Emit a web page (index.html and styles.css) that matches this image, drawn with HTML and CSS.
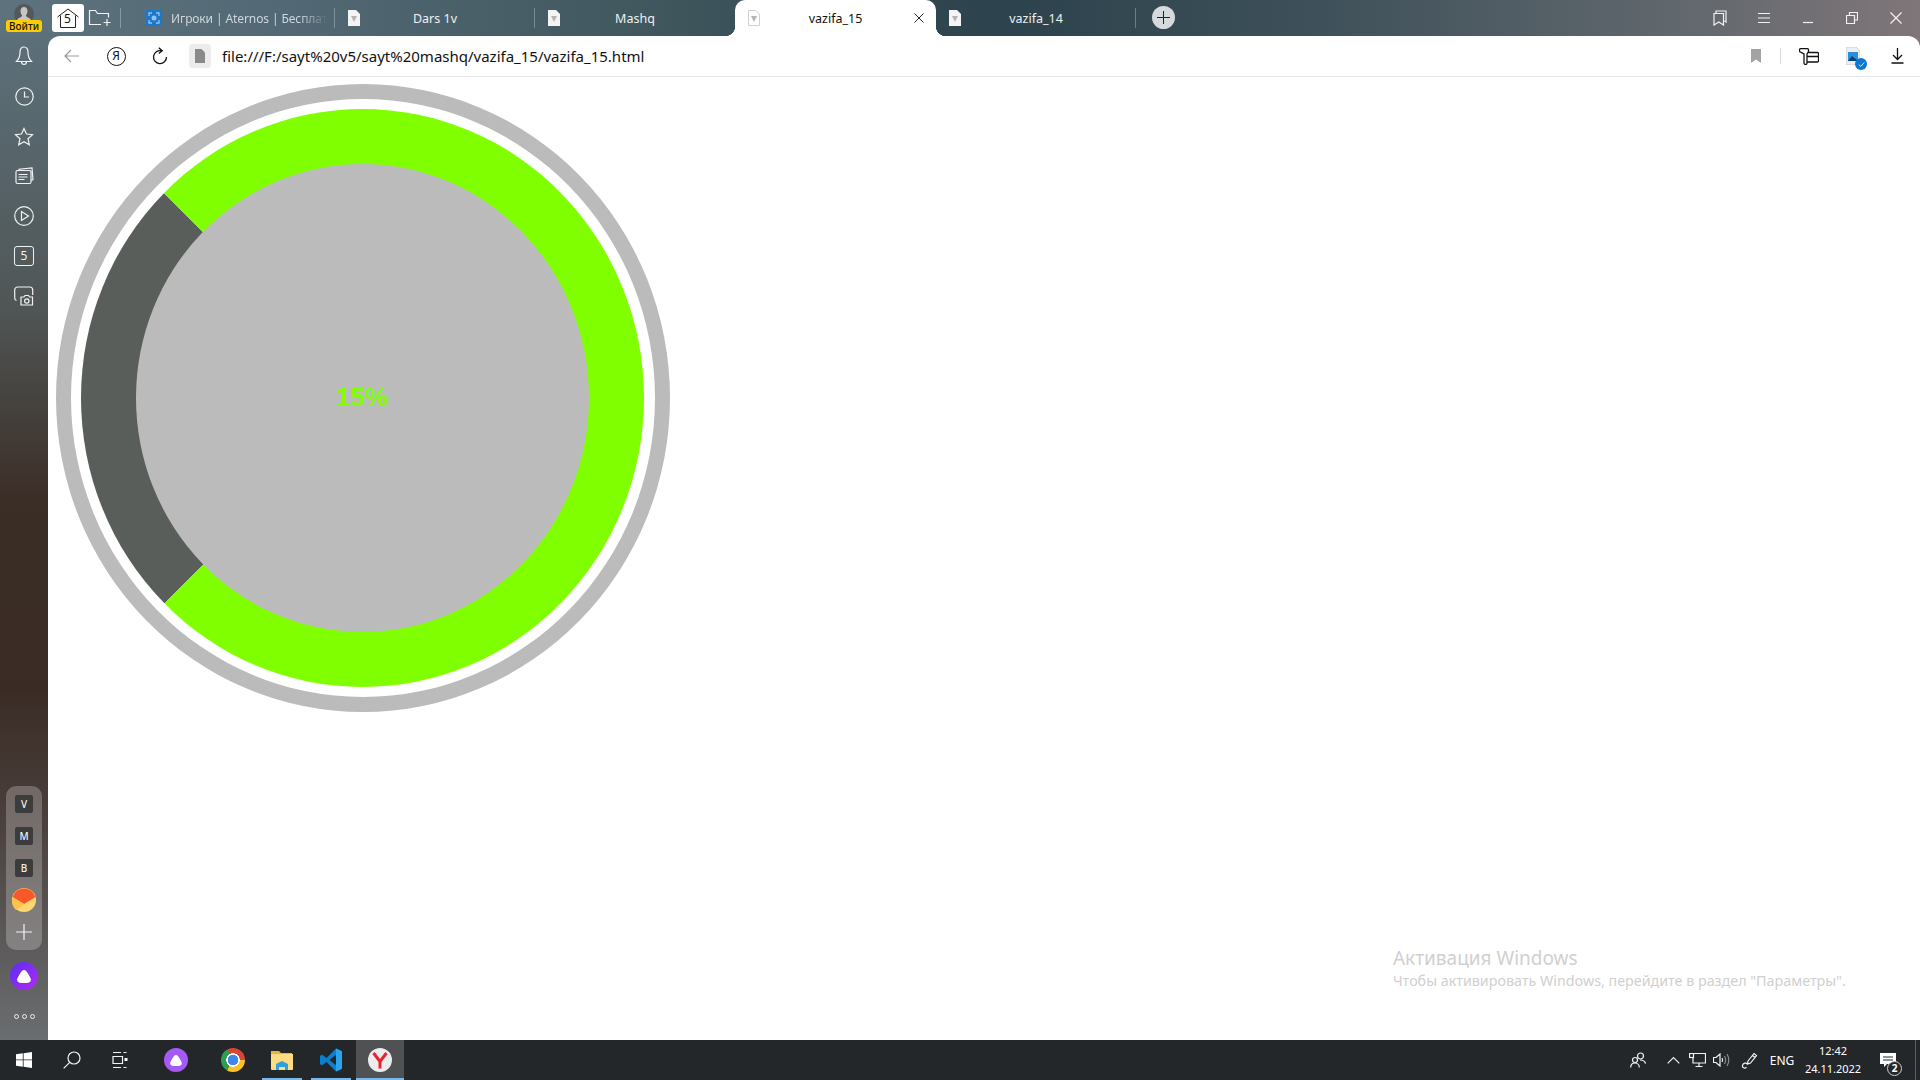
FILE: index.html
```html
<!DOCTYPE html>
<html lang="en">
<head>
  <meta charset="UTF-8" />
  <title>vazifa_15</title>
  <link rel="stylesheet" href="styles.css">
</head>
<body>
  <div class="browser">
    <div class="tabstrip">
      <div class="profile">
        <div class="avatar">
          <svg width="16" height="18" viewBox="0 0 16 18"><path class="fill-w" d="M8 1c-2.400 0-3.500 1.800-3.500 4 0 1.800.7 3.300 1.600 4.200-.1 1-.6 1.500-2 2.200L1.500 13v5h13v-5l-2.600-1.600c-1.400-.7-1.900-1.200-2-2.200.9-.9 1.600-2.400 1.600-4.200C11.500 2.800 10.400 1 8 1z"/></svg>
        </div>
        <span class="login">Войти</span>
      </div>
      <div class="home">
        <svg width="24" height="24" viewBox="0 0 24 24"><path class="line-k" d="M1.500 11 12 3l10.500 8M4.500 9.500V21.500h15V9.500"/></svg>
        <span class="home-num">5</span>
      </div>
      <div class="newgroup">
        <svg width="24" height="20" viewBox="0 0 24 20"><path class="line-w" d="M13 16.500H1.500V2.500h6l2 3h11v4M19 11v7M15.500 14.500h7"/></svg>
      </div>
      <span class="strip-sep"></span>
      <div class="tabs">
        <div class="tab tab-long">
          <svg class="fav-blue" width="16" height="16" viewBox="0 0 16 16"><rect width="16" height="16" fill="#1e77c8"/><path d="M3 6V3h3M10 3h3v3M13 10v3h-3M6 13H3v-3" fill="none" stroke="#8fc4f0" stroke-width="1.300"/><circle cx="8" cy="8" r="2.500" fill="#8fc4f0"/></svg>
          <span class="tab-title">Игроки | Aternos | Бесплат</span>
        </div>
        <div class="tab">
          <svg class="fav" width="12" height="16" viewBox="0 0 12 16"><path class="doc" d="M0 0h8l4 4v12H0z"/><path class="doc-mark" d="M3 6h6L6 12z"/></svg>
          <span class="tab-title">Dars 1v</span>
        </div>
        <div class="tab tab-nosep">
          <svg class="fav" width="12" height="16" viewBox="0 0 12 16"><path class="doc" d="M0 0h8l4 4v12H0z"/><path class="doc-mark" d="M3 6h6L6 12z"/></svg>
          <span class="tab-title">Mashq</span>
        </div>
        <div class="tab tab-active">
          <svg class="fav" width="12" height="16" viewBox="0 0 12 16"><path class="doc-pale" d="M.5.500h7.300l3.700 3.700v11.300H.5z"/><path class="doc-mark" d="M3 6h6L6 12z"/></svg>
          <span class="tab-title">vazifa_15</span>
          <svg class="tab-close" width="10" height="10" viewBox="0 0 10 10"><path class="line-k" d="M.5.500l9 9M9.500.500l-9 9"/></svg>
        </div>
        <div class="tab">
          <svg class="fav" width="12" height="16" viewBox="0 0 12 16"><path class="doc" d="M0 0h8l4 4v12H0z"/><path class="doc-mark" d="M3 6h6L6 12z"/></svg>
          <span class="tab-title">vazifa_14</span>
        </div>
      </div>
      <div class="newtab">
        <svg width="13" height="13" viewBox="0 0 13 13"><path class="line-k" d="M6.500 0v13M0 6.500h13"/></svg>
      </div>
      <div class="win-btns">
        <div class="win-btn"><svg width="14" height="16" viewBox="0 0 14 16"><path class="line-w" d="M3 3V1h10v11l-1.500-1M1 3.500h9.500v11.500l-4.700-3L1 15z"/></svg></div>
        <div class="win-btn"><svg width="14" height="10" viewBox="0 0 14 10"><path class="line-w" d="M1 .5h12M1 5h12M1 9.500h12"/></svg></div>
        <div class="win-btn"><svg width="12" height="12" viewBox="0 0 12 12"><path class="line-w" d="M1 10.500h10"/></svg></div>
        <div class="win-btn"><svg width="12" height="12" viewBox="0 0 12 12"><path class="line-w" d="M3.500 3V.5h8V8H9M.5 3.500h8v8h-8z"/></svg></div>
        <div class="win-btn"><svg width="12" height="12" viewBox="0 0 12 12"><path class="line-w" d="M.5.500l11 11M11.500.500l-11 11"/></svg></div>
      </div>
    </div>

    <div class="main">
      <div class="sidebar">
        <div class="side-icons">
          <div class="side-icon"><svg width="18" height="20" viewBox="0 0 18 20"><path class="line-w" d="M9 1C6.500 1 5 3.200 5 6c0 4.500-1.500 7.500-3.500 9.500h15C14.500 13.500 13 10.500 13 6c0-2.800-1.500-5-4-5zM6.500 15.500c0 2 1 3 2.500 3s2.500-1 2.500-3"/></svg></div>
          <div class="side-icon"><svg width="19" height="19" viewBox="0 0 19 19"><circle class="line-w" cx="9.500" cy="9.500" r="8.700"/><path class="line-w" d="M9.500 4.500v5.500h4.500"/></svg></div>
          <div class="side-icon"><svg width="20" height="19" viewBox="0 0 20 19"><path class="line-w" d="M10 1.500l2.500 5.500 6 .7-4.500 4 1.300 6L10 14.700l-5.300 3 1.300-6-4.500-4 6-.7z"/></svg></div>
          <div class="side-icon"><svg width="19" height="18" viewBox="0 0 19 18"><path class="line-w" d="M4 3.500V2.200L17 .8l1 12-2 .3M2.500 3.500h12a1.500 1.500 0 0 1 1.500 1.500v10a1.500 1.500 0 0 1-1.500 1.500h-12A1.500 1.500 0 0 1 1 15V5a1.500 1.500 0 0 1 1.500-1.500zM3.500 7.500h9M3.500 10h9M3.500 12.500h6"/></svg></div>
          <div class="side-icon"><svg width="20" height="20" viewBox="0 0 20 20"><circle class="line-w" cx="10" cy="10" r="9.300"/><path class="line-w" d="M7.500 5.500v9l7-4.500z"/></svg></div>
          <div class="side-icon"><span class="five">5</span></div>
          <div class="side-icon"><svg width="20" height="20" viewBox="0 0 20 20"><path class="line-w" d="M2.500 14.500C1 14 .7 13 .7 12V4a3 3 0 0 1 3-3h12a3 3 0 0 1 3 3v5M7 19h11.500v-8h-3l-1-1.500h-3.500l-1 1.500H7z"/><circle class="line-w" cx="12.800" cy="15" r="2.200"/></svg></div>
        </div>
        <div class="side-panel">
          <div class="side-slot"><span class="letter">V</span></div>
          <div class="side-slot"><span class="letter">M</span></div>
          <div class="side-slot"><span class="letter">B</span></div>
          <div class="side-slot">
            <svg width="24" height="24" viewBox="0 0 24 24"><circle cx="12" cy="12" r="12" fill="#ffd76e"/><path d="M3 4.500A12 12 0 0 1 21 4.500L23.500 9 12 16 .5 9z" fill="#f9572a"/><path d="M0 12.500A12 12 0 0 1 .5 9L12 16l-8 6A12 12 0 0 1 0 12.500z" fill="#ffc24d"/></svg>
          </div>
          <div class="side-slot"><svg width="16" height="16" viewBox="0 0 16 16"><path class="line-w" d="M8 0v16M0 8h16"/></svg></div>
        </div>
        <div class="alice-side">
          <svg width="14" height="13" viewBox="0 0 14 13"><path class="fill-w" d="M7 0C5.300 0 4.200 1.500 2.500 4.500.5 8-.5 9.500.5 11.300 1.300 12.700 3 13 7 13s5.700-.3 6.500-1.700c1-1.800 0-3.300-2-6.800C9.800 1.500 8.700 0 7 0z"/></svg>
        </div>
        <div class="side-dots"><i></i><i></i><i></i></div>
      </div>

      <div class="page">
        <div class="toolbar">
          <div class="nav-btn"><svg width="16" height="14" viewBox="0 0 16 14"><path class="line-grey" d="M15 7H1.500M7 1 1 7l6 6"/></svg></div>
          <div class="nav-btn"><span class="ya">Я</span></div>
          <div class="nav-btn"><svg width="16" height="18" viewBox="0 0 16 18"><path class="line-k2" d="M9.500 3.800A6.500 6.500 0 1 0 14.500 10M6.800.8l3.400 3-3.400 2.700"/></svg></div>
          <div class="file-chip"><svg width="10" height="14" viewBox="0 0 10 14"><path d="M0 0h6.500L10 3.500V14H0z" fill="#8a8a8a"/></svg></div>
          <span class="url">file:///F:/sayt%20v5/sayt%20mashq/vazifa_15/vazifa_15.html</span>
          <div class="tool-right">
            <div class="bookmark"><svg width="10" height="14" viewBox="0 0 10 14"><path d="M0 0h10v14L5 10.500 0 14z" fill="#a3a3a3"/></svg></div>
            <span class="tool-sep"></span>
            <div class="tool-btn"><svg width="20" height="17" viewBox="0 0 20 17"><path class="line-k2" d="M1.500.7h7a1 1 0 0 1 1 1v1.800L8 6v9a1.500 1.500 0 0 1-3 0V6L.5 3.500V1.700a1 1 0 0 1 1-1zM9.500 4.500h9a1 1 0 0 1 1 1v7.500a1 1 0 0 1-1 1H8M8 8.500h11.500"/></svg></div>
            <div class="tool-btn tool-img">
              <svg width="14" height="18" viewBox="0 0 14 18"><path d="M0 0h10l4 4v14H0z" fill="#eceff2" stroke="#b5b8bb" stroke-width=".6"/><rect x="2" y="5" width="10" height="9" fill="#2a8fd8"/><path d="M2 14l4-5 3 2.500 3 2.500z" fill="#0f3f77"/></svg>
              <span class="check"><svg width="9" height="7" viewBox="0 0 9 7"><path class="line-w" d="M1 3.500l2.500 2.500L8 1"/></svg></span>
            </div>
            <div class="tool-btn"><svg width="13" height="16" viewBox="0 0 13 16"><path class="line-k2" d="M6.500 0v11M2 7l4.500 4.500L11 7M.5 15h12"/></svg></div>
          </div>
        </div>
        <div class="content">
          <div class="gauge">
            <div class="gauge-ring">
              <div class="gauge-inner"><span class="gauge-label">15%</span></div>
            </div>
          </div>
          <div class="activation">
            <div class="activation-title">Активация Windows</div>
            <div class="activation-sub">Чтобы активировать Windows, перейдите в раздел "Параметры".</div>
          </div>
        </div>
      </div>
    </div>
  </div>

  <div class="taskbar">
    <div class="task-slot"><svg width="16" height="16" viewBox="0 0 16 16"><path class="fill-w" d="M0 2.300 6.800 1.300V7.500H0zM7.600 1.200 16 0V7.500H7.600zM0 8.300H6.800v6.400L0 13.700zM7.600 8.300H16V16L7.600 14.800z"/></svg></div>
    <div class="task-slot"><svg width="18" height="18" viewBox="0 0 18 18"><circle class="line-w" cx="11" cy="7" r="6"/><path class="line-w" d="M6.700 11.300 .7 17.300"/></svg></div>
    <div class="task-slot"><svg width="16" height="16" viewBox="0 0 16 16"><path class="line-w" d="M1 .5h8M1 15.500h8M1 4.500h9.500v7H1zM11.500.5h3M11.500 15.500h3"/><rect class="fill-w" x="12.500" y="6" width="3" height="3"/></svg></div>
    <div class="task-app task-alice">
      <span class="alice-task"><svg width="12" height="11" viewBox="0 0 14 13"><path class="fill-w" d="M7 0C5.300 0 4.200 1.500 2.500 4.500.5 8-.5 9.500.5 11.300 1.300 12.700 3 13 7 13s5.700-.3 6.500-1.700c1-1.800 0-3.300-2-6.800C9.800 1.500 8.700 0 7 0z"/></svg></span>
    </div>
    <div class="task-app task-chrome"><span class="chrome-logo"></span></div>
    <div class="task-app task-open">
      <svg width="22" height="20" viewBox="0 0 22 20"><path d="M0 1h8l2 2h11v3H0z" fill="#e8b63c"/><path d="M0 4h22v15a1 1 0 0 1-1 1H1a1 1 0 0 1-1-1z" fill="#ffdc80"/><path d="M5 20v-6l6-3 6 3v6h-3v-3H8v3z" fill="#2f9fe0"/></svg>
    </div>
    <div class="task-app task-open">
      <svg width="24" height="24" viewBox="0 0 24 24"><path d="M17 .5 7.500 10 3.200 6.700 1 7.800v8.400l2.200 1.100 4.300-3.300L17 23.500l6-2.800V3.300zM17 6.800v10.400L10.500 12z" fill="#0a7fd0" fill-rule="evenodd"/><path d="M17 .5l6 2.800v17.400l-6 2.800z" fill="#2aa4ec"/></svg>
    </div>
    <div class="task-app task-open task-active">
      <span class="yandex-logo"><svg width="16" height="17" viewBox="0 0 16 17"><path d="M1.500 1 8 9.500 14.500 1M8 9.500V16.500" fill="none" stroke="#e8212e" stroke-width="3"/></svg></span>
    </div>

    <div class="tray">
      <div class="tray-item tray-people"><svg width="16" height="16" viewBox="0 0 16 16"><circle class="line-w" cx="10.500" cy="4" r="3"/><circle class="line-w" cx="5" cy="8" r="2.500"/><path class="line-w" d="M.7 15.500c0-2.500 1.700-4.500 4.300-4.500s4.300 2 4.300 4.500M10 8c3 0 5 1.500 5.500 3.500"/></svg></div>
      <div class="tray-item tray-chevron"><svg width="13" height="8" viewBox="0 0 13 8"><path class="line-w" d="M.7 7.300 6.500 1.500l5.800 5.800"/></svg></div>
      <div class="tray-item tray-net"><svg width="17" height="14" viewBox="0 0 17 14"><path class="line-w" d="M4 .5h12.500v9.500H4V4.500M10 10v3.500M6.500 13.500h7"/><rect class="line-w" x=".5" y=".5" width="4" height="4"/></svg></div>
      <div class="tray-item tray-vol"><svg width="17" height="14" viewBox="0 0 17 14"><path class="line-w" d="M.5 4.500h2.500L7 1v12L3 9.500H.5z"/><path class="line-w" d="M9 5c.8 1.300.8 2.700 0 4"/><path class="line-dim" d="M11.500 3c1.400 2.500 1.400 5.500 0 8M14 1c2.200 3.700 2.200 8.300 0 12"/></svg></div>
      <div class="tray-item tray-pen"><svg width="17" height="17" viewBox="0 0 17 17"><path class="line-w" d="M7 9 13 1.500l2.500 2-6 7.500-3 1zM11.500 3.500l2.500 2M6.500 12c-1.500-1.700-4.500-1-5 1.500-.5 2 2 3.500 4 1.800"/></svg></div>
      <div class="tray-item tray-lang">ENG</div>
      <div class="tray-clock">
        <span>12:42</span>
        <span>24.11.2022</span>
      </div>
      <div class="tray-note">
        <svg width="16" height="14" viewBox="0 0 16 14"><path class="fill-w" d="M0 0h16v11H7l-3 3v-3H0z"/><path d="M3 4h10M3 7h10" stroke="#24272a" stroke-width="1"/></svg>
        <span class="note-badge">2</span>
      </div>
      <span class="tray-end"></span>
    </div>
  </div>
</body>
</html>
```

FILE: styles.css
```css
* {
  box-sizing: border-box;
}
html, body {
  margin: 0;
  height: 100%;
  overflow: hidden;
}
body {
  display: flex;
  flex-direction: column;
  font-family: "Noto Sans", "Open Sans", sans-serif;
  background: #fff;
}
svg {
  display: block;
}
.line-w, .line-k, .line-k2, .line-grey, .line-dim {
  fill: none;
  stroke-width: 1.2;
}
.line-w { stroke: #f2f2f2; }
.line-k { stroke: #222; stroke-width: 1; }
.line-k2 { stroke: #111; stroke-width: 1.3; }
.line-grey { stroke: #999; }
.line-dim { stroke: #8a8c8e; }
.fill-w { fill: #fff; }

/* browser frame */
.browser {
  flex: 1;
  display: flex;
  flex-direction: column;
  min-height: 0;
  background: linear-gradient(90deg, #5d727c 0%, #526975 15%, #41585f 33%, #2c424c 52%, #3d5059 68%, #62686e 88%, #807679 100%);
}
.tabstrip {
  height: 36px;
  display: flex;
  align-items: center;
  color: #fff;
}
.profile {
  width: 48px;
  height: 36px;
  position: relative;
  flex: none;
}
.avatar {
  position: absolute;
  left: 14px;
  top: 4px;
  width: 20px;
  height: 20px;
  border-radius: 50%;
  background: #55585a;
  overflow: hidden;
  display: flex;
  justify-content: center;
  align-items: flex-end;
}
.avatar .fill-w {
  fill: #c9c6c2;
}
.login {
  position: absolute;
  left: 6px;
  top: 20px;
  width: 36px;
  height: 12px;
  border-radius: 3px;
  background: #fc0;
  color: #111;
  font-size: 10px;
  line-height: 12px;
  text-align: center;
  font-weight: 500;
}
.home {
  flex: none;
  width: 32px;
  height: 28px;
  margin-left: 4px;
  background: #fff;
  border-radius: 3px;
  display: flex;
  align-items: center;
  justify-content: center;
  position: relative;
}
.home-num {
  position: absolute;
  left: 12px;
  top: 8px;
  font-size: 12px;
  line-height: 14px;
  color: #111;
}
.newgroup {
  flex: none;
  width: 24px;
  margin-left: 4px;
}
.strip-sep {
  flex: none;
  width: 1px;
  height: 20px;
  margin-left: 8px;
  background: rgba(255, 255, 255, .3);
}
.tabs {
  display: flex;
  height: 36px;
  margin-left: 14px;
}
.tab {
  width: 200px;
  flex: none;
  display: flex;
  align-items: center;
  padding-left: 13px;
  position: relative;
  font-size: 12.500px;
  background: linear-gradient(rgba(255, 255, 255, .28), rgba(255, 255, 255, .28)) right center / 1px 20px no-repeat;
}
.tab-nosep {
  background: none;
}
.tab-title {
  flex: 1;
  padding-right: 25px;
  text-align: center;
  white-space: nowrap;
  color: #eef1f2;
}
.tab-long {
  padding-left: 11px;
}
.tab-long .tab-title {
  margin-left: 9px;
  margin-right: 11px;
  padding-right: 0;
  font-size: 12px;
  letter-spacing: -.1px;
  text-align: left;
  -webkit-mask-image: linear-gradient(90deg, #000 82%, transparent 100%);
  mask-image: linear-gradient(90deg, #000 82%, transparent 100%);
  color: #cfd6da;
}
.fav, .fav-blue {
  flex: none;
}
.doc { fill: #f4f4f4; }
.doc-pale { fill: #fff; stroke: #d0d0d0; stroke-width: 1; }
.doc-mark { fill: #b4b4b4; }
.tab-active {
  background: #fff;
  border-radius: 10px 10px 0 0;
  width: 201px;
}
.tab-active .tab-title {
  color: #111;
}
.tab-close {
  position: absolute;
  right: 12px;
  top: 13px;
}
.tab-active::before, .tab-active::after {
  content: "";
  position: absolute;
  bottom: 0;
  width: 10px;
  height: 10px;
}
.tab-active::before {
  left: -10px;
  background: radial-gradient(circle at 0 0, transparent 10px, #fff 10.500px);
}
.tab-active::after {
  right: -10px;
  background: radial-gradient(circle at 100% 0, transparent 10px, #fff 10.500px);
}
.newtab {
  flex: none;
  width: 23px;
  height: 23px;
  margin-left: 16px;
  margin-top: -2px;
  border-radius: 50%;
  background: #d6dadd;
  display: flex;
  align-items: center;
  justify-content: center;
}
.win-btns {
  margin-left: auto;
  display: flex;
  padding-right: 2px;
}
.win-btn {
  width: 44px;
  height: 36px;
  display: flex;
  align-items: center;
  justify-content: center;
}

/* sidebar */
.main {
  flex: 1;
  display: flex;
  min-height: 0;
}
.sidebar {
  width: 48px;
  flex: none;
  display: flex;
  flex-direction: column;
  align-items: center;
  background: linear-gradient(180deg, #5c707a 0%, #505656 27%, #3b2e27 46%, #3a2c25 65%, #473c38 76%, #6a6e70 100%);
}
.side-icons {
  width: 100%;
}
.side-icon {
  height: 40px;
  display: flex;
  align-items: center;
  justify-content: center;
}
.five {
  width: 20px;
  height: 20px;
  border: 1.200px solid #f2f2f2;
  border-radius: 3px;
  color: #f2f2f2;
  font-size: 12px;
  line-height: 17px;
  text-align: center;
}
.side-panel {
  margin-top: auto;
  width: 36px;
  padding: 2px 0;
  border-radius: 10px;
  background: rgba(255, 255, 255, .24);
}
.side-slot {
  height: 32px;
  display: flex;
  align-items: center;
  justify-content: center;
}
.letter {
  width: 18px;
  height: 18px;
  background: #3c3c3c;
  border-radius: 2px;
  color: #f2f2f2;
  font-size: 10px;
  line-height: 18px;
  font-weight: 500;
  text-align: center;
}
.alice-side {
  width: 28px;
  height: 28px;
  margin-top: 12px;
  border-radius: 50%;
  background: linear-gradient(135deg, #5a2cf5, #b22cf0);
  display: flex;
  align-items: center;
  justify-content: center;
}
.side-dots {
  display: flex;
  gap: 3px;
  margin: 22px 0 20px;
}
.side-dots i {
  width: 5px;
  height: 5px;
  margin: 1.500px 0;
  border: 1.200px solid #eee;
  border-radius: 50%;
}

/* toolbar + page */
.page {
  flex: 1;
  min-width: 0;
  display: flex;
  flex-direction: column;
  background: #fff;
  border-radius: 12px 12px 0 0;
}
.toolbar {
  height: 41px;
  flex: none;
  display: flex;
  align-items: center;
  padding-left: 6px;
  padding-right: 1px;
  border-bottom: 1px solid #e6e6e6;
}
.nav-btn {
  width: 36px;
  height: 36px;
  margin-right: 8px;
  display: flex;
  align-items: center;
  justify-content: center;
}
.ya {
  width: 19px;
  height: 19px;
  border: 1.300px solid #111;
  border-radius: 50%;
  color: #111;
  font-size: 12px;
  line-height: 16px;
  text-align: center;
}
.file-chip {
  width: 22px;
  height: 24px;
  margin-left: 3px;
  border-radius: 4px;
  background: #ececec;
  display: flex;
  align-items: center;
  justify-content: center;
}
.url {
  margin-left: 11px;
  font-size: 15px;
  color: #111;
  white-space: nowrap;
}
.tool-right {
  margin-left: auto;
  display: flex;
  align-items: center;
}
.bookmark {
  width: 24px;
  margin-right: 12px;
  display: flex;
  justify-content: center;
}
.tool-sep {
  width: 1px;
  height: 16px;
  margin-right: 6px;
  background: #ddd;
}
.tool-btn {
  width: 44px;
  height: 36px;
  display: flex;
  align-items: center;
  justify-content: center;
  position: relative;
}
.check {
  position: absolute;
  left: 24px;
  top: 20px;
  width: 12px;
  height: 12px;
  border-radius: 50%;
  background: #0a78d2;
  display: flex;
  align-items: center;
  justify-content: center;
}
.check svg {
  width: 7px;
}
.content {
  flex: 1;
  position: relative;
  padding: 7px 8px;
}

/* the circle */
.gauge {
  width: 614px;
  height: 628px;
  border: 15px solid #bbb;
  border-radius: 50%;
  display: flex;
  align-items: center;
  justify-content: center;
}
.gauge-ring {
  width: 563px;
  height: 578px;
  margin-right: 2px;
  border-radius: 50%;
  background: conic-gradient(from 225deg at 288px 289px, #5a5e5a 0deg 90deg, #7fff00 90deg);
  display: flex;
  align-items: center;
  justify-content: center;
}
.gauge-inner {
  width: 453px;
  height: 468px;
  border-radius: 50%;
  background: #bbb;
  display: flex;
  align-items: center;
  justify-content: center;
}
.gauge-label {
  font-family: "Liberation Sans", Arial, sans-serif;
  font-size: 26px;
  font-weight: 700;
  margin-bottom: 2px;
  color: #7fff00;
}
.activation {
  position: absolute;
  left: 1345px;
  top: 869px;
  color: #d0d0d0;
  white-space: nowrap;
}
.activation-title {
  font-size: 19px;
  line-height: 25px;
}
.activation-sub {
  font-size: 14.300px;
  line-height: 20px;
}

/* windows taskbar */
.taskbar {
  height: 40px;
  flex: none;
  display: flex;
  align-items: stretch;
  background: #24272a;
  color: #fff;
}
.task-slot {
  width: 48px;
  display: flex;
  align-items: center;
  justify-content: center;
}
.task-app {
  width: 49px;
  display: flex;
  align-items: center;
  justify-content: center;
  position: relative;
}
.task-alice {
  width: 48px;
  margin-left: 8px;
}
.task-chrome {
  margin-left: 8px;
}
.alice-task {
  width: 24px;
  height: 24px;
  border-radius: 50%;
  background: #a45bf5;
  display: flex;
  align-items: center;
  justify-content: center;
}
.chrome-logo {
  width: 24px;
  height: 24px;
  border-radius: 50%;
  background:
    radial-gradient(circle, #3f86ea 0 5px, #fff 5.500px 6.500px, transparent 7px),
    conic-gradient(#dd4437 0 90deg, #fbc02d 90deg 210deg, #2e9e4f 210deg 330deg, #dd4437 330deg);
}
.task-open::after {
  content: "";
  position: absolute;
  bottom: 0;
  left: 5px;
  width: 40px;
  height: 2px;
  background: #76b9ed;
}
.task-active {
  background: #4f5153;
  width: 48px;
  margin-left: 1px;
}
.task-active::after {
  left: 0;
  width: 100%;
}
.yandex-logo {
  width: 24px;
  height: 24px;
  border-radius: 50%;
  background: #ececec;
  display: flex;
  align-items: center;
  justify-content: center;
}
.tray {
  margin-left: auto;
  display: flex;
  align-items: center;
}
.tray-item {
  width: 24px;
  display: flex;
  justify-content: center;
}
.tray-chevron {
  width: 22px;
  margin-left: 12px;
}
.tray-net {
  margin-left: 1px;
}
.tray-pen {
  margin-left: 4px;
}
.tray-lang {
  width: 42px;
  font-size: 12px;
}
.tray-clock {
  width: 74px;
  padding-right: 14px;
  display: flex;
  flex-direction: column;
  align-items: center;
  font-size: 11px;
  line-height: 18px;
}
.tray-note {
  width: 38px;
  height: 40px;
  position: relative;
  padding: 13px 0 0 3px;
}
.note-badge {
  position: absolute;
  left: 10px;
  top: 21px;
  width: 15px;
  height: 15px;
  border: 1.500px solid #d0d0d0;
  border-radius: 50%;
  background: #24272a;
  font-size: 10px;
  font-weight: 700;
  line-height: 12px;
  text-align: center;
}
.tray-end {
  width: 1px;
  height: 40px;
  margin-right: 4px;
  background: #5c5f62;
}
```
